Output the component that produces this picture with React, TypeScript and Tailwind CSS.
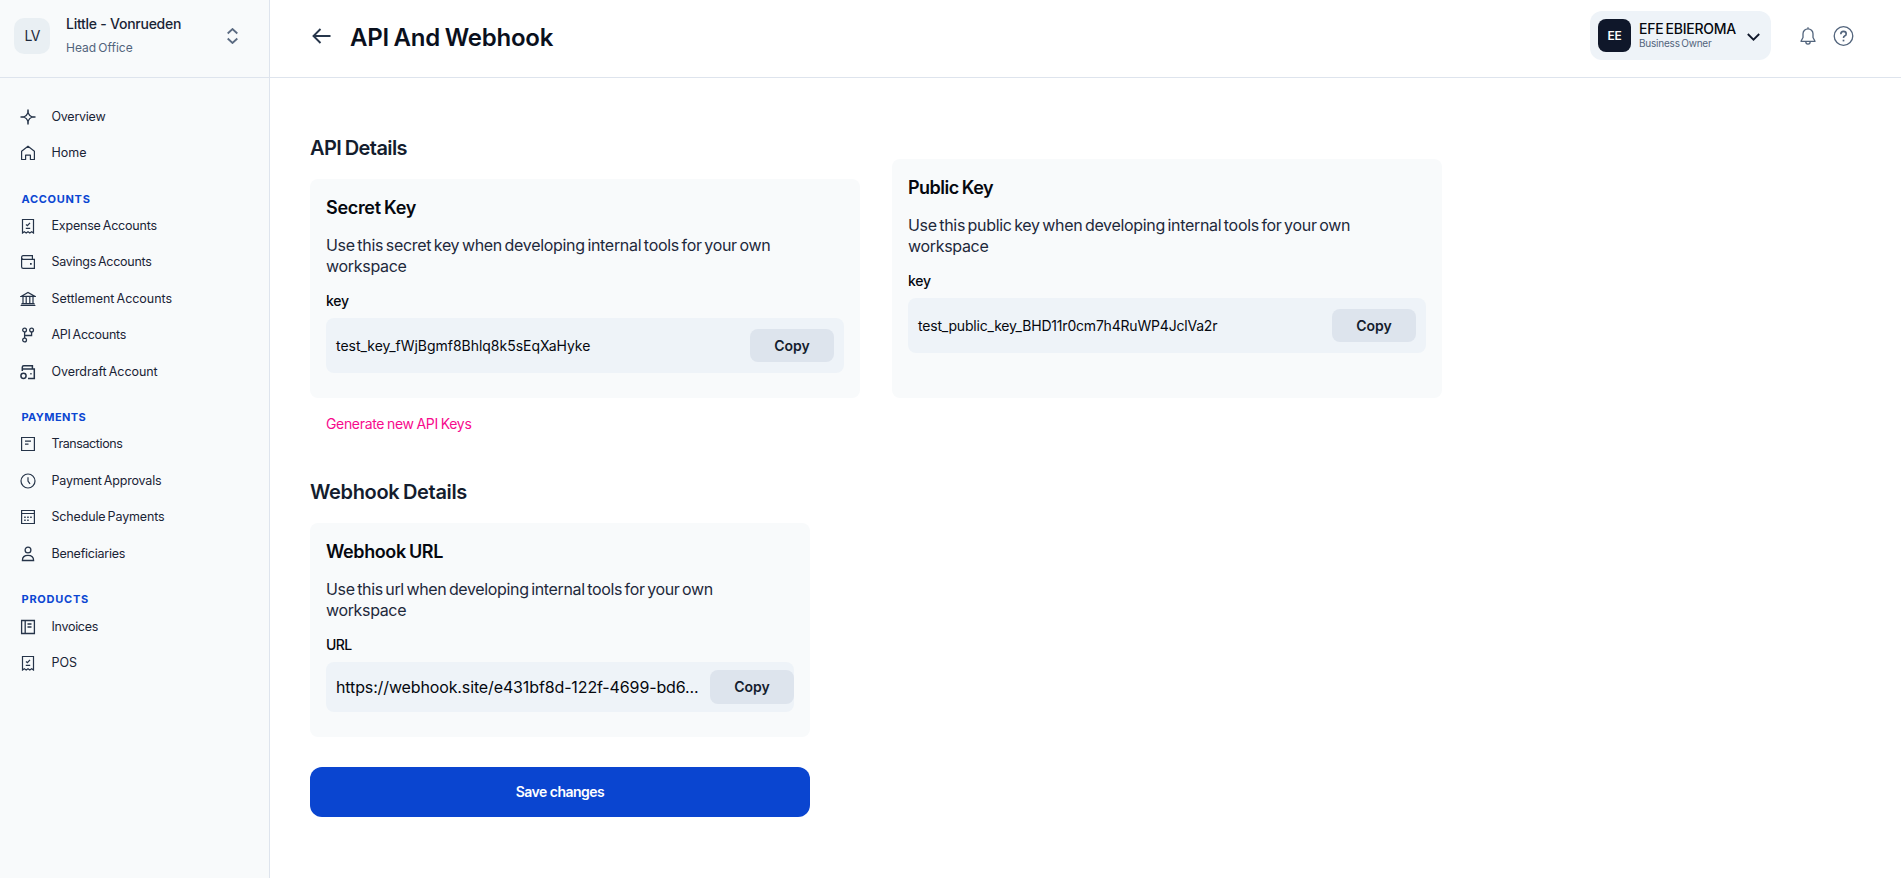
import React from "react";

type IconProps = { children: React.ReactNode; strokeWidth?: number };

function Icon({ children, strokeWidth = 1.1 }: IconProps) {
  return (
    <svg
      className="size-4 shrink-0 text-[#263449]"
      viewBox="0 0 16 16"
      fill="none"
      stroke="currentColor"
      strokeWidth={strokeWidth}
    >
      {children}
    </svg>
  );
}

const icons = {
  overview: (
    <Icon strokeWidth={1.3}>
      <path d="M8 3.8Q9.2 6.800 12.200 8Q9.200 9.200 8 12.200Q6.800 9.200 3.800 8Q6.800 6.800 8 3.800z" />
      <path d="M8 .5v3.300M8 12.200v3.300M.5 8h3.300M12.200 8h3.300" strokeWidth="1.500" />
    </Icon>
  ),
  home: (
    <Icon strokeWidth={1.2}>
      <path d="M1.600 14.500V6.200L8 1.200l6.400 5v8.300h-4v-4.300H5.600v4.300z" strokeLinejoin="round" />
    </Icon>
  ),
  receipt: (
    <Icon strokeWidth={1.2}>
      <path d="M2.500 15V1.500h11V15l-1.800-1.300-1.900 1.300L8 13.700 6.200 15l-1.900-1.300z" />
      <path d="M6 6.500l1.400 1.200L10 4.900M5.800 10.300h4.400" strokeWidth="1.300" />
    </Icon>
  ),
  wallet: (
    <Icon strokeWidth={1.200}>
      <path d="M1.600 3.500v9.300q0 1.600 1.600 1.600h11.200V5.300H3.200Q1.600 5.300 1.600 3.600 1.600 1.700 3.200 1.700h9.200v3.600" />
      <path d="M10 9.900h1.700" strokeWidth="1.600" />
    </Icon>
  ),
  bank: (
    <Icon strokeWidth={1.200}>
      <path d="M1 5.400 8 1.500l7 3.900zM3 5.600v6.700M6.200 5.600v6.700M9.800 5.600v6.700M13 5.600v6.700M1.500 12.500h13M.6 14.500h14.800" />
      <path d="M1 13.500h14" strokeOpacity="0.5" />
    </Icon>
  ),
  branch: (
    <Icon strokeWidth={1.300}>
      <circle cx="4.600" cy="3" r="1.900" />
      <circle cx="11.600" cy="3" r="1.900" />
      <circle cx="4.600" cy="13" r="1.900" />
      <path d="M4.600 4.900v6.200M4.600 8.500h7V4.900" />
    </Icon>
  ),
  overdraft: (
    <Icon strokeWidth={1.500}>
      <circle cx="3.500" cy="11.800" r="2.600" />
      <path d="M2.300 7V3.200q0-1.500 1.500-1.500h8.600v3.200M2.300 4.900h12v9.500H8M10.300 9.700h1.300" />
    </Icon>
  ),
  note: (
    <Icon strokeWidth={1.200}>
      <path d="M1.600 1.500h12.800v13H1.600zM5 5.200h6M5 8.200h3.500" />
    </Icon>
  ),
  clock: (
    <Icon strokeWidth={1.200}>
      <circle cx="8" cy="8" r="7" />
      <path d="M8 4.200V8l2 2.800" />
    </Icon>
  ),
  calendar: (
    <Icon strokeWidth={1.200}>
      <path d="M1.600 1.500h12.800v13H1.600zM1.600 4.500h12.800" />
      <path d="M4.200 8.200h1.500M7.200 8.200h1.500M10.200 8.200h1.500M4.200 11.200h1.500M7.200 11.200h1.500" strokeWidth="1.500" />
    </Icon>
  ),
  person: (
    <Icon strokeWidth={1.300}>
      <circle cx="8" cy="4" r="2.900" />
      <path d="M2.400 14.500q0-5.200 5.600-5.200t5.600 5.200z" />
    </Icon>
  ),
  invoice: (
    <Icon strokeWidth={1.300}>
      <path d="M1.600 1.500h12.800v13H1.600zM5.200 1.500v13M7.500 5h4M7.500 8h4" />
    </Icon>
  ),
};

type NavItem = { label: string; icon: keyof typeof icons; tracking: string };
type NavGroup = { title?: string; titleTracking?: string; items: NavItem[] };

const groups: NavGroup[] = [
  {
    items: [
      { label: "Overview", icon: "overview", tracking: "tracking-[-0.02em]" },
      { label: "Home", icon: "home", tracking: "tracking-normal" },
    ],
  },
  {
    title: "ACCOUNTS",
    titleTracking: "tracking-[0.063em]",
    items: [
      { label: "Expense Accounts", icon: "receipt", tracking: "tracking-[-0.016em]" },
      { label: "Savings Accounts", icon: "wallet", tracking: "tracking-[-0.023em]" },
      { label: "Settlement Accounts", icon: "bank", tracking: "tracking-[-0.003em]" },
      { label: "API Accounts", icon: "branch", tracking: "tracking-[-0.023em]" },
      { label: "Overdraft Account", icon: "overdraft", tracking: "tracking-[-0.006em]" },
    ],
  },
  {
    title: "PAYMENTS",
    titleTracking: "tracking-[0.035em]",
    items: [
      { label: "Transactions", icon: "note", tracking: "tracking-[-0.033em]" },
      { label: "Payment Approvals", icon: "clock", tracking: "tracking-[-0.015em]" },
      { label: "Schedule Payments", icon: "calendar", tracking: "tracking-[-0.012em]" },
      { label: "Beneficiaries", icon: "person", tracking: "tracking-[-0.02em]" },
    ],
  },
  {
    title: "PRODUCTS",
    titleTracking: "tracking-[0.068em]",
    items: [
      { label: "Invoices", icon: "invoice", tracking: "tracking-[-0.024em]" },
      { label: "POS", icon: "receipt", tracking: "tracking-normal" },
    ],
  },
];

function Sidebar() {
  return (
    <aside className="flex w-[270px] shrink-0 flex-col border-r border-[#dee4ed] bg-[#f8fafb]">
      <div className="flex h-[78px] items-start border-b border-[#dee4ed] pl-3.5 pr-[31px] pt-[14px]">
        <div className="mt-1 flex size-9 shrink-0 items-center justify-center rounded-[10px] bg-[#e9eff3] text-sm tracking-[-0.05em] text-[#1e293b]">
          LV
        </div>
        <div className="ml-4 flex grow flex-col">
          <span className="text-sm font-[550] leading-5 tracking-[-0.018em] text-[#1a2436]">
            Little - Vonrueden
          </span>
          <span className="mt-[5px] text-xs leading-[18px] text-[#52647c] [word-spacing:-0.1em]">
            Head Office
          </span>
        </div>
        <svg
          className="mt-3.5 h-4 w-[11px]"
          viewBox="0 0 11 16"
          fill="none"
          stroke="#5b6b82"
          strokeWidth="1.800"
        >
          <path d="M.7 5.500 5.500 1l4.800 4.500M.7 10.500 5.500 15l4.800-4.500" />
        </svg>
      </div>
      <nav className="flex flex-col pt-[20.4px]">
        {groups.map((group, index) => (
          <div key={index} className="flex flex-col">
            {group.title && (
              <div className="h-[36.4px] pl-[21.5px] pt-[19.5px]">
                <h3
                  className={`text-[11px] font-bold leading-4 text-[#0b46d2] ${group.titleTracking}`}
                >
                  {group.title}
                </h3>
              </div>
            )}
            {group.items.map((item) => (
              <a key={item.label} className="flex h-[36.450px] items-center pl-5">
                {icons[item.icon]}
                <span
                  className={`ml-[15.5px] text-[12.5px] leading-4 text-[#1a2436] [word-spacing:-0.1em] ${item.tracking}`}
                >
                  {item.label}
                </span>
              </a>
            ))}
          </div>
        ))}
      </nav>
    </aside>
  );
}

function Header() {
  return (
    <header className="flex h-[78px] shrink-0 items-start border-b border-[#dee4ed] pl-[42px] pr-[47px]">
      <svg
        className="mt-7 h-4 w-[19px]"
        viewBox="0 0 19 16"
        fill="none"
        stroke="#27364b"
        strokeWidth="1.900"
      >
        <path d="M18.500 8H1.500M8.500 1 1.500 8l7 7" />
      </svg>
      <h1 className="ml-[19px] mt-[22px] text-2xl font-semibold leading-8 tracking-[-0.009em] text-[#0a101d] [word-spacing:-0.05em]">
        API And Webhook
      </h1>
      <div className="ml-auto mt-[11px] flex h-[49px] w-[181px] items-center rounded-xl bg-[#eef3f8] pl-2 pr-[11px]">
        <div className="flex size-[33px] items-center justify-center rounded-lg bg-[#0f172a] text-xs font-semibold tracking-[-0.022em] text-white">
          EE
        </div>
        <div className="ml-2 flex flex-col pb-0.5">
          <span className="text-sm font-medium leading-4 tracking-[-0.017em] text-[#05080f] [word-spacing:-0.1em]">
            EFE EBIEROMA
          </span>
          <span className="text-[10px] leading-3 tracking-[-0.022em] text-[#52647c] [word-spacing:-0.1em]">
            Business Owner
          </span>
        </div>
        <svg
          className="ml-auto mt-0.5 h-2 w-[13px]"
          viewBox="0 0 13 8"
          fill="none"
          stroke="#0f172a"
          strokeWidth="1.800"
        >
          <path d="M.8 1l5.700 5.700L12.200 1" />
        </svg>
      </div>
      <svg
        className="ml-[29px] mt-[27px] h-[18px] w-4"
        viewBox="0 0 16 18"
        fill="none"
        stroke="#52647c"
        strokeWidth="1.300"
        strokeLinejoin="round"
      >
        <path d="M1 14.300 3 10.500V6.800a5 5 0 0 1 10 0v3.700l2 3.800zM8 1.700V.3" />
        <path d="M5.800 14.500a2.200 2.600 0 0 0 4.400 0" />
      </svg>
      <svg
        className="ml-[17px] mt-[26px] size-[21px]"
        viewBox="0 0 21 21"
        fill="none"
        stroke="#52647c"
        strokeWidth="1.300"
      >
        <circle cx="10.500" cy="10" r="9.300" />
        <path
          d="M7.800 8.200Q7.800 5.400 10.500 5.400T13.200 7.900Q13.200 9.300 11.600 10 10.500 10.500 10.500 12"
          strokeWidth="1.600"
        />
        <path d="M10.500 13.700v1.700" strokeWidth="1.700" />
      </svg>
    </header>
  );
}

type KeyCardProps = {
  title: string;
  titleTracking: string;
  text: string;
  textTracking: string;
  label: string;
  labelTracking: string;
  className: string;
  children: React.ReactNode;
};

function KeyCard(props: KeyCardProps) {
  return (
    <section className={`flex flex-col rounded-lg bg-[#f8fafb] px-4 pt-[17px] ${props.className}`}>
      <h3
        className={`text-lg font-semibold leading-6 text-[#05080f] [word-spacing:-0.05em] ${props.titleTracking}`}
      >
        {props.title}
      </h3>
      <p
        className={`mt-[15px] max-w-[460px] text-base leading-[21px] text-[#1e293b] [word-spacing:-0.1em] ${props.textTracking}`}
      >
        {props.text}
      </p>
      <span
        className={`mt-3.5 text-sm font-medium leading-5 text-[#05080f] ${props.labelTracking}`}
      >
        {props.label}
      </span>
      {props.children}
    </section>
  );
}

function CopyButton({ className }: { className: string }) {
  return (
    <button
      className={`w-[84px] shrink-0 rounded-lg bg-[#dde4ed] text-sm font-semibold text-[#141d2e] ${className}`}
    >
      Copy
    </button>
  );
}

function Content() {
  return (
    <main className="flex flex-col pl-10">
      <div className="flex items-start gap-8 pt-[57px]">
        <div className="flex w-[550px] flex-col">
          <h2 className="text-xl font-semibold leading-[26px] tracking-[-0.029em] text-[#141d2e] [word-spacing:-0.05em]">
            API Details
          </h2>
          <KeyCard
            title="Secret Key"
            titleTracking="tracking-[-0.017em]"
            text="Use this secret key when developing internal tools for your own workspace"
            textTracking="tracking-[-0.019em]"
            label="key"
            labelTracking="tracking-[-0.02em]"
            className="mt-[18px] h-[219px]"
          >
            <div className="mt-[7px] flex h-[55px] items-center justify-between rounded-lg bg-[#eef3f8] px-2.5">
              <span className="text-sm tracking-[-0.002em] text-[#05080f]">
                test_key_fWjBgmf8Bhlq8k5sEqXaHyke
              </span>
              <CopyButton className="h-[33px]" />
            </div>
          </KeyCard>
          <a className="ml-4 mt-4 text-sm leading-5 tracking-[-0.024em] text-[#f70a8d] [word-spacing:-0.05em]">
            Generate new API Keys
          </a>
        </div>
        <KeyCard
          title="Public Key"
          titleTracking="tracking-[-0.029em]"
          text="Use this public key when developing internal tools for your own workspace"
          textTracking="tracking-[-0.02em]"
          label="key"
          labelTracking="tracking-[-0.02em]"
          className="mt-6 h-[239px] w-[550px]"
        >
          <div className="mt-[7px] flex h-[55px] items-center justify-between rounded-lg bg-[#eef3f8] px-2.5">
            <span className="text-sm tracking-[-0.014em] text-[#05080f]">
              test_public_key_BHD11r0cm7h4RuWP4JclVa2r
            </span>
            <CopyButton className="h-[33px]" />
          </div>
        </KeyCard>
      </div>
      <div className="mt-[45px] flex w-[500px] flex-col">
        <h2 className="text-xl font-semibold leading-[26px] tracking-[-0.017em] text-[#141d2e] [word-spacing:-0.05em]">
          Webhook Details
        </h2>
        <KeyCard
          title="Webhook URL"
          titleTracking="tracking-[-0.022em]"
          text="Use this url when developing internal tools for your own workspace"
          textTracking="tracking-[-0.022em]"
          label="URL"
          labelTracking="tracking-[-0.044em]"
          className="mt-[18px] h-[214px]"
        >
          <div className="mt-[7px] flex h-[50px] items-center justify-between rounded-lg bg-[#eef3f8] pl-2.5">
            <span className="text-base tracking-[-0.008em] text-[#05080f]">
              https://webhook.site/e431bf8d-122f-4699-bd6...
            </span>
            <CopyButton className="h-[34px]" />
          </div>
        </KeyCard>
        <button className="mt-[30px] h-[50px] rounded-xl bg-[#0a45d0] text-sm font-semibold tracking-[-0.037em] text-white">
          Save changes
        </button>
      </div>
    </main>
  );
}

export default function App() {
  return (
    <div className="flex h-screen overflow-hidden bg-white font-['Inter',sans-serif]">
      <Sidebar />
      <div className="flex min-w-0 grow flex-col">
        <Header />
        <Content />
      </div>
    </div>
  );
}
